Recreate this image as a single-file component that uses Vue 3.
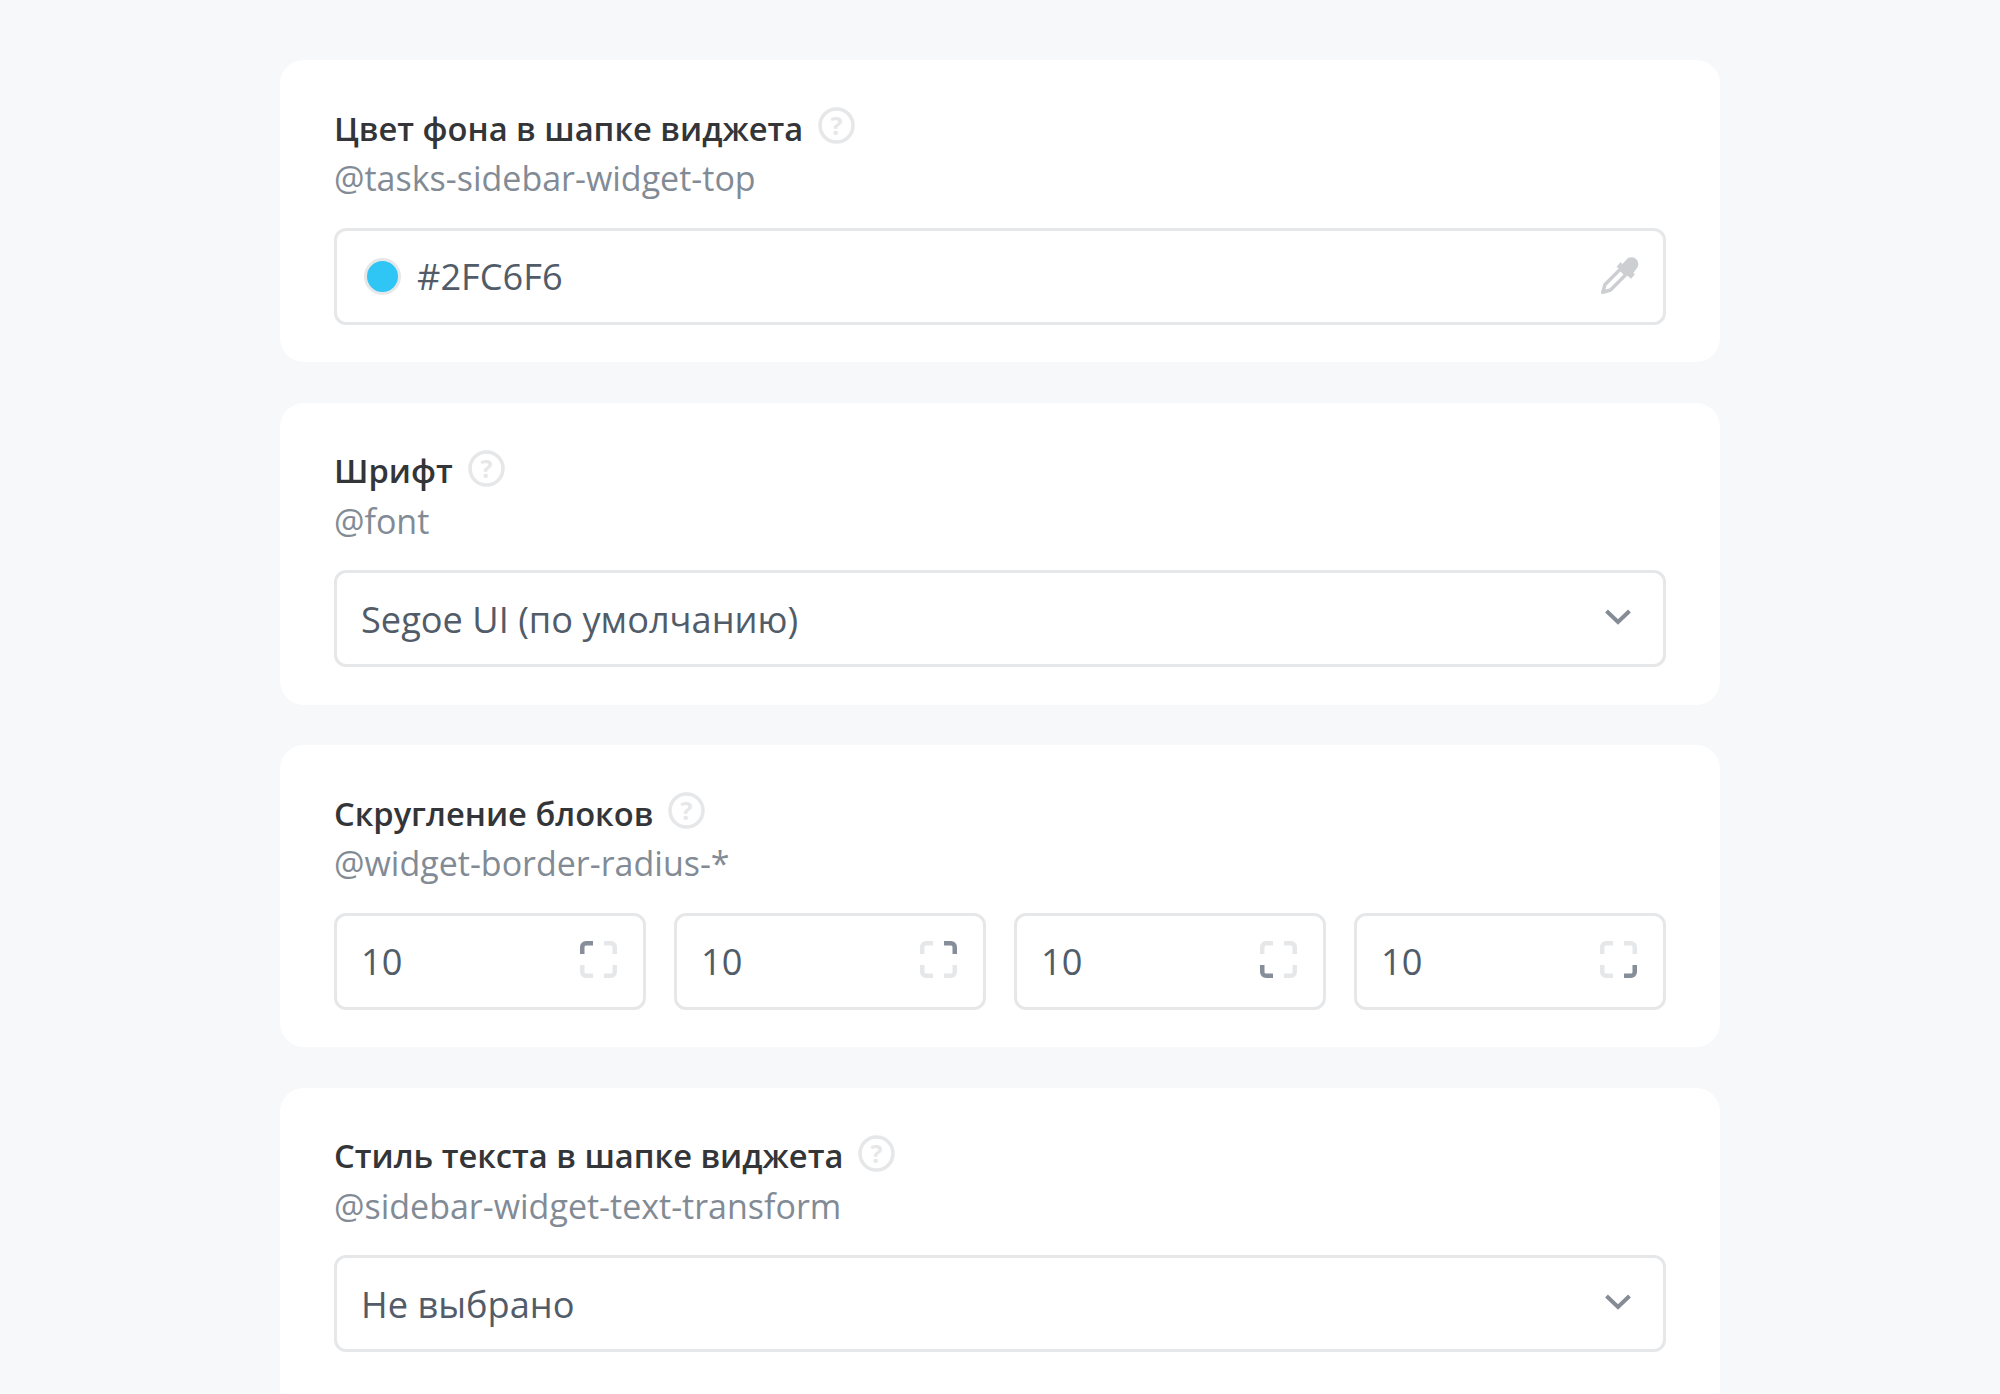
<template>
  <div class="page">
    <section v-for="field in fields" :key="field.token" class="card">
      <div class="title">
        <span>{{ field.title }}</span>
        <svg class="help" viewBox="0 0 37 37" width="37" height="37">
          <circle cx="18.5" cy="18.5" r="16.5" fill="none" stroke="#e6e7e9" stroke-width="3.500" />
          <text x="18.5" y="27.500" text-anchor="middle" class="help-mark">?</text>
        </svg>
      </div>
      <div class="token">{{ field.token }}</div>

      <div v-if="field.type === 'color'" class="input">
        <span class="swatch"></span>
        <span class="value">{{ field.value }}</span>
        <svg class="picker" viewBox="0 0 38 38" width="38" height="38">
          <path d="M19.500 13L4 28.500 1.800 36.200 9.500 34 25 18.500z" fill="#fff" stroke="#ccced2" stroke-width="3.500" stroke-linejoin="round" />
          <path d="M17.500 8.500L32 20.500" fill="none" stroke="#ccced2" stroke-width="6" />
          <path d="M26.500 2.500a6.800 6.800 0 0 1 9.500 9.500l-4 5.500-11-9z" fill="#ccced2" />
        </svg>
      </div>

      <div v-else-if="field.type === 'select'" class="input">
        <span class="value">{{ field.value }}</span>
        <svg class="chevron" viewBox="0 0 26 16" width="26" height="16">
          <path d="M1.500 2l11.500 11L24.500 2" fill="none" stroke="#868c96" stroke-width="4" />
        </svg>
      </div>

      <div v-else class="corners">
        <div v-for="corner in corners" :key="corner" class="input corner-input">
          <span class="value">{{ field.value }}</span>
          <svg class="frame" viewBox="0 0 37 37" width="37" height="37" fill="none" stroke-width="4.500">
            <path d="M2.250 13V6a3.750 3.750 0 0 1 3.750-3.750H13" :stroke="corner === 'tl' ? '#868e99' : '#e6e7e9'" />
            <path d="M24 2.250h7A3.750 3.750 0 0 1 34.750 6v7" :stroke="corner === 'tr' ? '#868e99' : '#e6e7e9'" />
            <path d="M2.250 24v7A3.750 3.750 0 0 0 6 34.750h7" :stroke="corner === 'bl' ? '#868e99' : '#e6e7e9'" />
            <path d="M24 34.750h7A3.750 3.750 0 0 0 34.750 31v-7" :stroke="corner === 'br' ? '#868e99' : '#e6e7e9'" />
          </svg>
        </div>
      </div>
    </section>
  </div>
</template>

<script setup>
const corners = ["tl", "tr", "bl", "br"];

const fields = [
  {
    title: "Цвет фона в шапке виджета",
    token: "@tasks-sidebar-widget-top",
    type: "color",
    value: "#2FC6F6",
  },
  {
    title: "Шрифт",
    token: "@font",
    type: "select",
    value: "Segoe UI (по умолчанию)",
  },
  {
    title: "Скругление блоков",
    token: "@widget-border-radius-*",
    type: "corners",
    value: "10",
  },
  {
    title: "Стиль текста в шапке виджета",
    token: "@sidebar-widget-text-transform",
    type: "select",
    value: "Не выбрано",
  },
];
</script>

<style>
html,
body {
  background: #f7f8fa;
  overflow: hidden;
}
</style>

<style scoped>
.page {
  box-sizing: border-box;
  width: 1440px;
  height: 1394px;
  margin: 0 auto;
  padding-top: 60px;
  display: flex;
  flex-direction: column;
  gap: 40.500px;
  overflow: hidden;
  font-family: "Open Sans", "Noto Sans", sans-serif;
}

.card {
  flex: none;
  box-sizing: border-box;
  height: 302px;
  padding: 0 54px;
  background: #fff;
  border-radius: 24px;
}

/* the last card runs past the bottom of the page */
.card:last-child {
  height: 400px;
}

.title {
  display: flex;
  align-items: center;
  gap: 15px;
  height: 44px;
  margin-top: 46px;
  font-size: 32.700px;
  font-weight: 600;
  color: #333538;
}

.help {
  flex: none;
  margin-top: -5px;
}

.help-mark {
  font-size: 25px;
  font-weight: 700;
  fill: #e6e7e9;
}

.token {
  height: 44px;
  margin-top: 6px;
  margin-bottom: 27.500px;
  line-height: 44px;
  font-size: 34px;
  color: #828b95;
}

.input {
  box-sizing: border-box;
  display: flex;
  align-items: center;
  height: 97px;
  padding: 0 24px;
  background: #fff;
  border: 3px solid #e6e7e9;
  border-radius: 12px;
}

.value {
  flex: 1;
  font-size: 36.200px;
  color: #525c69;
}

.swatch {
  flex: none;
  box-sizing: border-box;
  width: 37px;
  height: 37px;
  margin-left: 3px;
  margin-right: 16px;
  background: #2fc6f6;
  border: 3px solid #e6e7e9;
  border-radius: 50%;
}

.picker {
  flex: none;
  margin-top: -2px;
}

.chevron {
  flex: none;
  margin-top: -4px;
  margin-right: 8px;
}

.corners {
  display: grid;
  grid-template-columns: repeat(4, 1fr);
  gap: 28px;
}

.corner-input {
  padding-right: 26px;
}

.frame {
  flex: none;
  margin-top: -3px;
}
</style>
